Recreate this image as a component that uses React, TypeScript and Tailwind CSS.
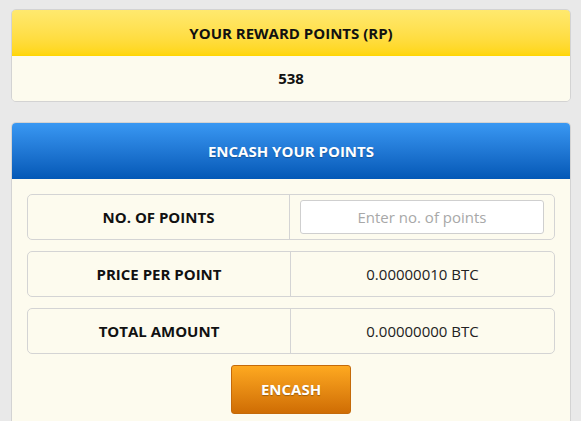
export default function App() {
  const rows = [
    { label: "NO. OF POINTS", input: true },
    { label: "PRICE PER POINT", value: "0.00000010 BTC" },
    { label: "TOTAL AMOUNT", value: "0.00000000 BTC" },
  ];

  return (
    <div className="h-[421px] overflow-hidden bg-[#e9e9e9] px-[11px] pt-[9px] font-['Open_Sans',sans-serif] text-[15px] text-[#111]">
      {/* Reward points */}
      <div className="w-[560px] rounded-[5px] border border-[#d3d3d3] overflow-hidden">
        <div className="h-[46px] flex items-center justify-center font-bold bg-gradient-to-b from-[#ffe96e] to-[#ffd600]">
          YOUR REWARD POINTS (RP)
        </div>
        <div className="h-[45px] flex items-center justify-center font-bold bg-[#fdfbee]">538</div>
      </div>

      {/* Encash */}
      <div className="mt-[20px] w-[560px] h-[300px] rounded-t-[5px] border border-[#d3d3d3] border-b-0 overflow-hidden bg-[#fdfbee]">
        <div className="h-[56px] flex items-center justify-center font-bold text-white bg-gradient-to-b from-[#3998f3] to-[#0358b6] [text-shadow:0_1px_1px_rgba(0,0,0,0.25)]">
          ENCASH YOUR POINTS
        </div>
        <div className="px-[15px] pt-[15px] flex flex-col gap-[11px]">
          {rows.map((r) => (
            <div key={r.label} className="h-[46px] flex rounded-[5px] border border-[#d4d4d4]">
              <div className="w-[263px] flex items-center justify-center font-bold border-r border-[#d4d4d4]">
                {r.label}
              </div>
              <div className="flex-1 flex items-center justify-center">
                {r.input ? (
                  <input
                    placeholder="Enter no. of points"
                    className="ml-[10px] mr-[10px] w-[244px] h-[34px] rounded-[3px] border border-[#cfcfcf] bg-white text-center text-[15px] placeholder:text-[#a8a8a8] outline-none"
                  />
                ) : (
                  <span className="text-[#222]">{r.value}</span>
                )}
              </div>
            </div>
          ))}
          <div className="flex justify-center">
            <button className="w-[120px] h-[49px] rounded-[3px] border border-[#c46a0a] font-bold text-white bg-gradient-to-b from-[#fea920] to-[#cf6d04] [text-shadow:0_1px_1px_rgba(0,0,0,0.3)]">
              ENCASH
            </button>
          </div>
        </div>
      </div>
    </div>
  );
}
